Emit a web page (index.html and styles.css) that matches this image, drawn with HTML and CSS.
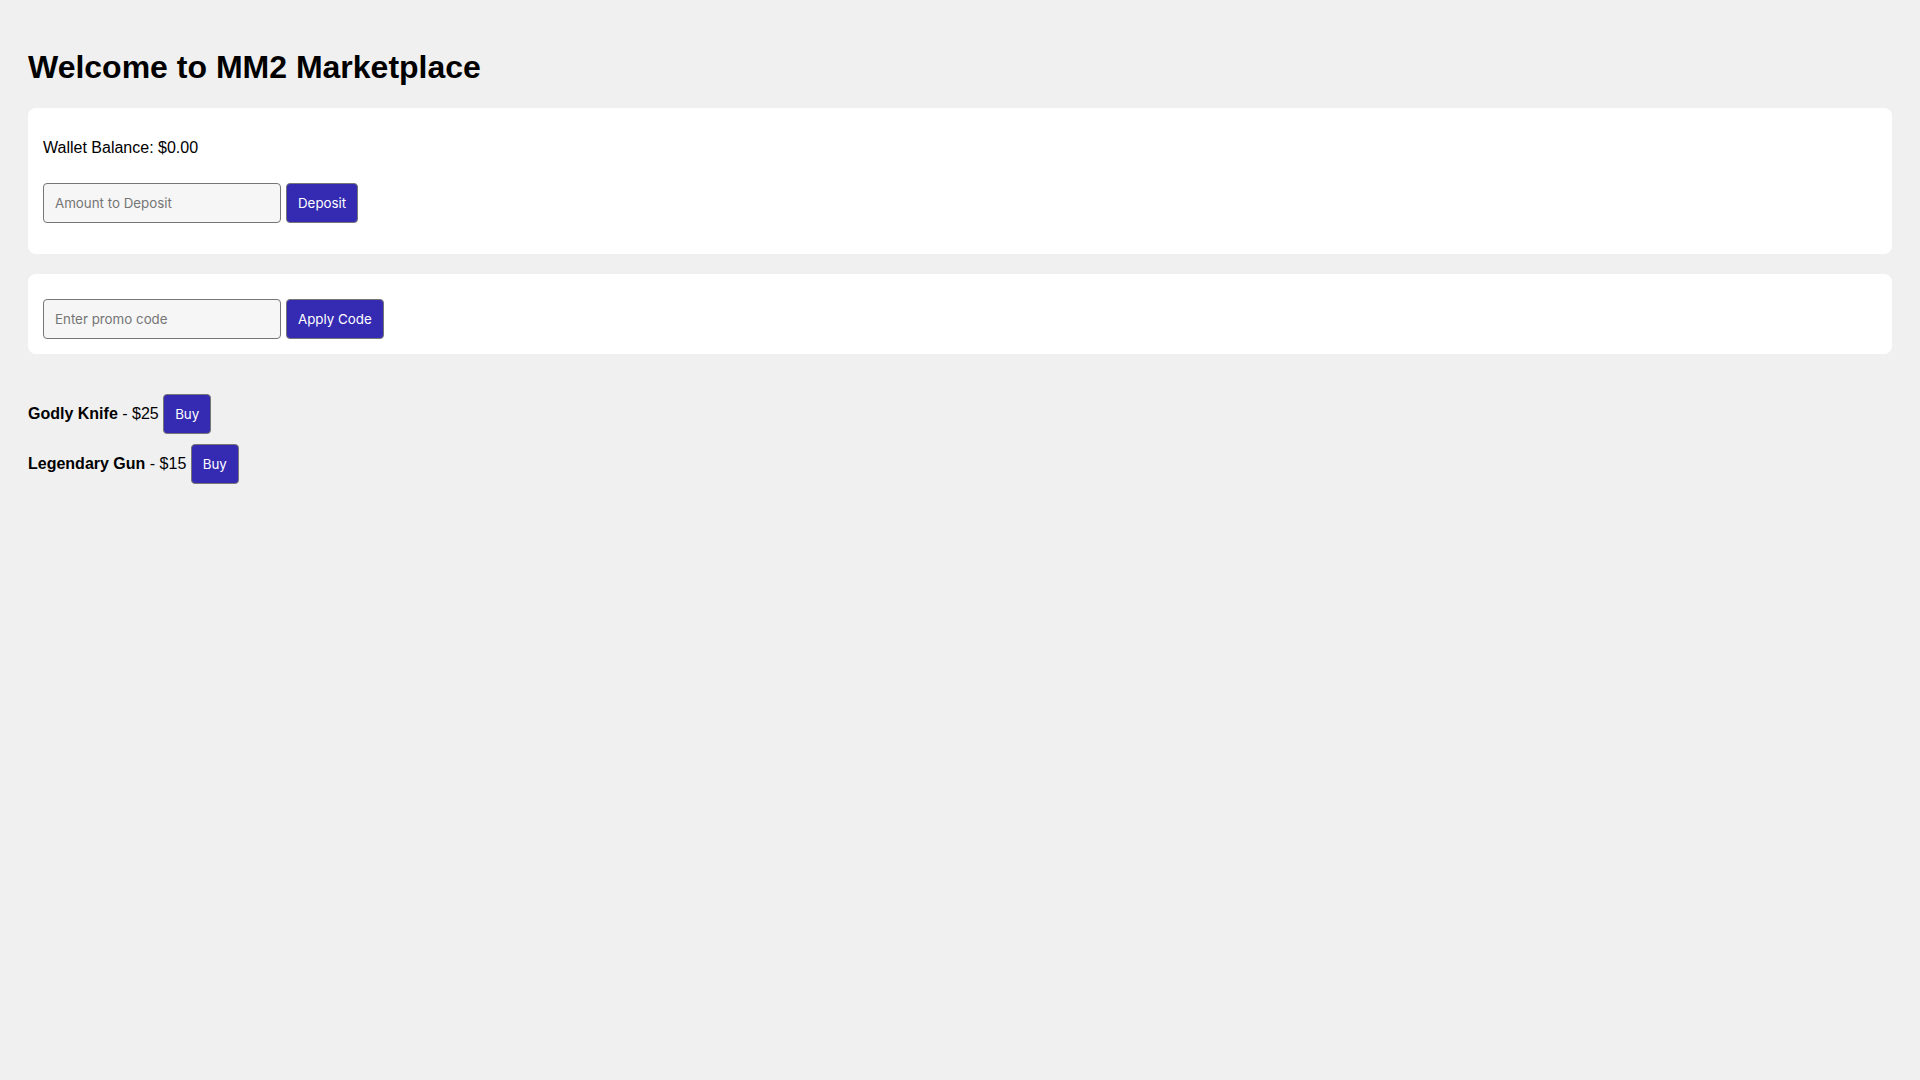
FILE: index.html
```html
<!DOCTYPE html>
<html lang="en">
<head>
    <meta charset="UTF-8">
    <meta name="viewport" content="width=device-width, initial-scale=1.0">
    <title>MM2 Marketplace</title>
    <link rel="stylesheet" href="styles.css">
</head>
<body>
    <h1>Welcome to MM2 Marketplace</h1>

    <div class="card">
        <p class="balance">Wallet Balance: $<span id="balance">0.00</span></p>
        <div class="field-row deposit-row">
            <input type="number" id="depositAmount" placeholder="Amount to Deposit">
            <button class="btn" onclick="deposit()">Deposit</button>
        </div>
    </div>

    <div class="card">
        <div class="field-row">
            <input type="text" id="promoCode" placeholder="Enter promo code">
            <button class="btn" onclick="applyCode()">Apply Code</button>
        </div>
    </div>

    <div class="products">
        <div class="item"><b>Godly Knife</b> - $25 <button class="btn" onclick="buy(25)">Buy</button></div>
        <div class="item"><b>Legendary Gun</b> - $15 <button class="btn" onclick="buy(15)">Buy</button></div>
    </div>

    <script>
        let balance = 0;

        function render() {
            document.getElementById("balance").innerText = balance.toFixed(2);
        }

        function deposit() {
            const amount = parseFloat(document.getElementById("depositAmount").value);
            if (!amount || amount <= 0) return;
            balance += amount;
            document.getElementById("depositAmount").value = "";
            render();
        }

        function applyCode() {
            const code = document.getElementById("promoCode").value.trim();
            if (!code) return;
            alert("Invalid promo code");
        }

        function buy(price) {
            if (balance < price) {
                alert("Not enough balance!");
                return;
            }
            balance -= price;
            render();
        }

        render();
    </script>
</body>
</html>
```

FILE: styles.css
```css
body {  /* page */
    margin: 0;
    padding: 28px;
    background: #f0f0f0;
    font-family: "Liberation Sans", Arial, sans-serif;
    font-size: 16px;
    color: #000;
}
h1 {  /* title */
    font-size: 32px;
    font-weight: bold;
    margin: 0.67em 0;
}
.card {  /* white panel */
    background: #fff;
    border-radius: 8px;
    padding: 15px;
    margin-bottom: 20px;
}
.balance {  /* wallet text */
    margin: 16px 0 26px 0;
}
.field-row {  /* input + button */
    display: flex;
    align-items: center;
    gap: 5px;
    margin-top: 10px;
}
.balance + .field-row {
    margin-top: 0;
}
.deposit-row {
    margin-bottom: 16px;
}
.field-row input {  /* text field */
    width: 238px;
    height: 40px;
    box-sizing: border-box;
    padding: 0 11px;
    border: 1px solid #767676;
    border-radius: 4px;
    background: #f6f6f6;
    font-family: Inter, "Noto Sans", sans-serif;
    font-size: 13.333px;
    color: #000;
    -moz-appearance: textfield;
}
.field-row input::-webkit-outer-spin-button,
.field-row input::-webkit-inner-spin-button {
    -webkit-appearance: none;
    margin: 0;
}
.field-row input::placeholder {
    color: #757575;
}
.btn {  /* blue button */
    height: 40px;
    box-sizing: border-box;
    padding: 0 11px;
    border: 1px solid #767676;
    border-radius: 4px;
    background: #352ab2;
    color: #fff;
    font-family: Inter, "Noto Sans", sans-serif;
    font-size: 13.333px;
    cursor: pointer;
}
.products {  /* item list */
    display: flex;
    flex-direction: column;
    align-items: flex-start;
    gap: 10px;
    margin-top: 40px;
}
.item .btn {  /* buy button sits on the text baseline */
    vertical-align: baseline;
}
```
